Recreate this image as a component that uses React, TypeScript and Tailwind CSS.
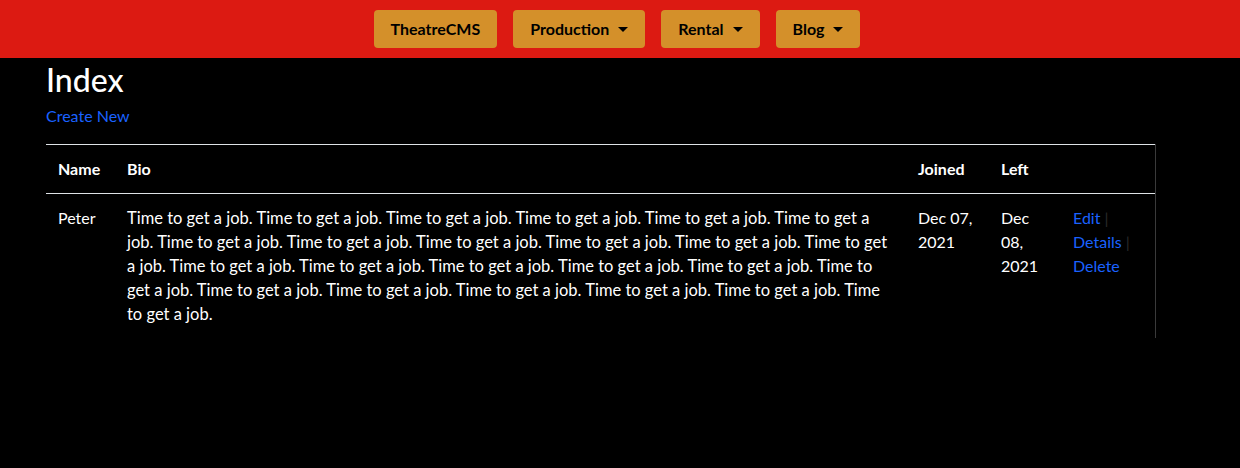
/* ---- Data ---- */

const NAV = [
  { label: "TheatreCMS", caret: false },
  { label: "Production", caret: true },
  { label: "Rental", caret: true },
  { label: "Blog", caret: true },
];

const BIO = Array(24).fill("Time to get a job.").join(" ");

/* ---- Components ---- */

function Caret() {
  return (
    <span className="ml-[9px] inline-block h-0 w-0 border-x-[5px] border-t-[5px] border-x-transparent border-t-black align-[3px]" />
  );
}

function NavButton({ label, caret }: { label: string; caret: boolean }) {
  return (
    <button className="flex h-[38px] items-center rounded-[4px] bg-[#d4902a] px-[17px] text-[16px] font-bold text-black">
      {label}
      {caret && <Caret />}
    </button>
  );
}

export default function App() {
  return (
    <div
      className="min-h-[468px] bg-black text-white"
      style={{ fontFamily: '"Segoe UI", Lato, "Noto Sans", sans-serif' }}
    >
      {/* Header */}
      <nav className="flex h-[58px] items-center justify-center gap-4 bg-[#dc1a12] pr-[6px]">
        {NAV.map((n) => (
          <NavButton key={n.label} label={n.label} caret={n.caret} />
        ))}
      </nav>

      {/* Content */}
      <main className="pl-[46px] pr-[85px]">
        <h2 className="mt-[1px] text-[32px] font-medium leading-[42px]">Index</h2>
        <p className="mt-[3px] text-[16px] leading-[24px]">
          <a className="text-[#1a62ff]">Create New</a>
        </p>

        <table className="mt-[16px] w-[1109px] table-fixed border-collapse text-left text-[16px] leading-[24px]">
          <colgroup>
            <col className="w-[69px]" />
            <col className="w-[791px]" />
            <col className="w-[83px]" />
            <col className="w-[72px]" />
            <col className="w-[94px]" />
          </colgroup>
          <thead>
            <tr className="border-y border-[#dee2e6]">
              <th className="px-3 py-3 font-bold">Name</th>
              <th className="px-3 py-3 font-bold">Bio</th>
              <th className="px-3 py-3 font-bold">Joined</th>
              <th className="px-3 py-3 font-bold">Left</th>
              <th className="border-r border-[#3a3a3a] px-3 py-3" />
            </tr>
          </thead>
          <tbody>
            <tr className="align-top">
              <td className="px-3 py-3">Peter</td>
              <td className="px-3 py-3 text-[16.5px]">{BIO}</td>
              <td className="px-3 py-3">Dec 07, 2021</td>
              <td className="px-3 py-3">Dec 08, 2021</td>
              <td className="border-r border-[#3a3a3a] px-3 py-3">
                <a className="text-[#1a62ff]">Edit</a>{" "}
                <span className="text-[#2a2a2a]">|</span>
                <br />
                <a className="text-[#1a62ff]">Details</a>{" "}
                <span className="text-[#2a2a2a]">|</span>
                <br />
                <a className="text-[#1a62ff]">Delete</a>
              </td>
            </tr>
          </tbody>
        </table>
      </main>
    </div>
  );
}
